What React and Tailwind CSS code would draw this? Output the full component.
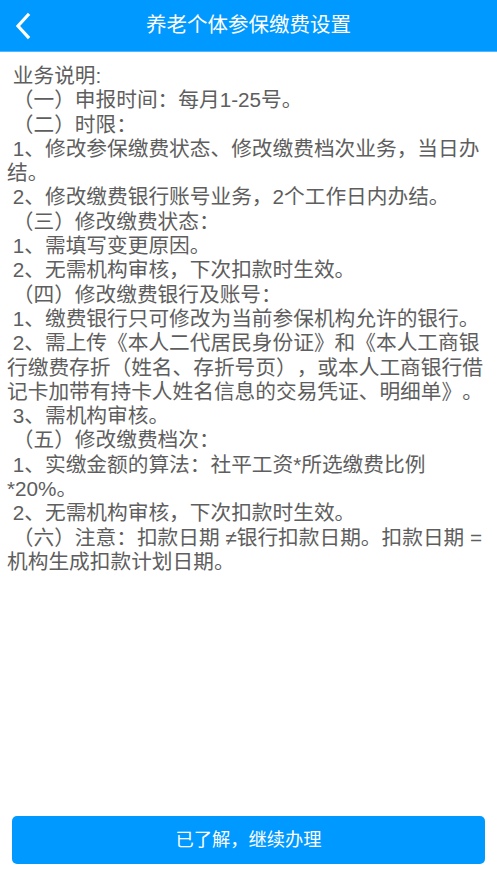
import React from 'react';

const font = { fontFamily: '"Liberation Sans", "Noto Sans CJK SC", sans-serif' };

// 说明文字，每段一行，前面带空格
const lines = [
  ' 业务说明:',
  ' （一）申报时间：每月1-25号。',
  ' （二）时限：',
  ' 1、修改参保缴费状态、修改缴费档次业务，当日办结。',
  ' 2、修改缴费银行账号业务，2个工作日内办结。',
  ' （三）修改缴费状态：',
  ' 1、需填写变更原因。',
  ' 2、无需机构审核，下次扣款时生效。',
  ' （四）修改缴费银行及账号：',
  ' 1、缴费银行只可修改为当前参保机构允许的银行。',
  ' 2、需上传《本人二代居民身份证》和《本人工商银行缴费存折（姓名、存折号页），或本人工商银行借记卡加带有持卡人姓名信息的交易凭证、明细单》。',
  ' 3、需机构审核。',
  ' （五）修改缴费档次：',
  ' 1、实缴金额的算法：社平工资*所选缴费比例*20%。',
  ' 2、无需机构审核，下次扣款时生效。',
  ' （六）注意：扣款日期 ≠银行扣款日期。扣款日期 =机构生成扣款计划日期。',
];

export default function App() {
  return (
    <div className="w-[497px] h-[883px] bg-white flex flex-col [text-spacing-trim:space-all]" style={font}>
      <div className="h-[52px] bg-[#0099ff] flex items-center relative border-b border-[#4db8ff]">
        <button className="absolute left-[13px] top-[12px] p-0">
          <svg width="20" height="28" viewBox="0 0 20 28">
            <polyline
              points="15,3 5,14 15,25"
              fill="none"
              stroke="white"
              strokeWidth="3.2"
              strokeLinecap="square"
            />
          </svg>
        </button>
        <div className="flex-1 text-center text-white text-[20.5px]">养老个体参保缴费设置</div>
      </div>

      <div className="flex-1 pl-[7px] pr-[4px] pt-[12px] text-[#5e5e5e] text-[20.7px] leading-[24.3px]">
        {lines.map((l, i) => (
          <p key={i} className="whitespace-pre-wrap">
            {l}
          </p>
        ))}
      </div>

      <div className="px-[12px] pb-[19px]">
        <button className="w-full h-[48px] rounded-[5px] bg-[#0099ff] text-white text-[18.3px]">
          已了解，继续办理
        </button>
      </div>
    </div>
  );
}
